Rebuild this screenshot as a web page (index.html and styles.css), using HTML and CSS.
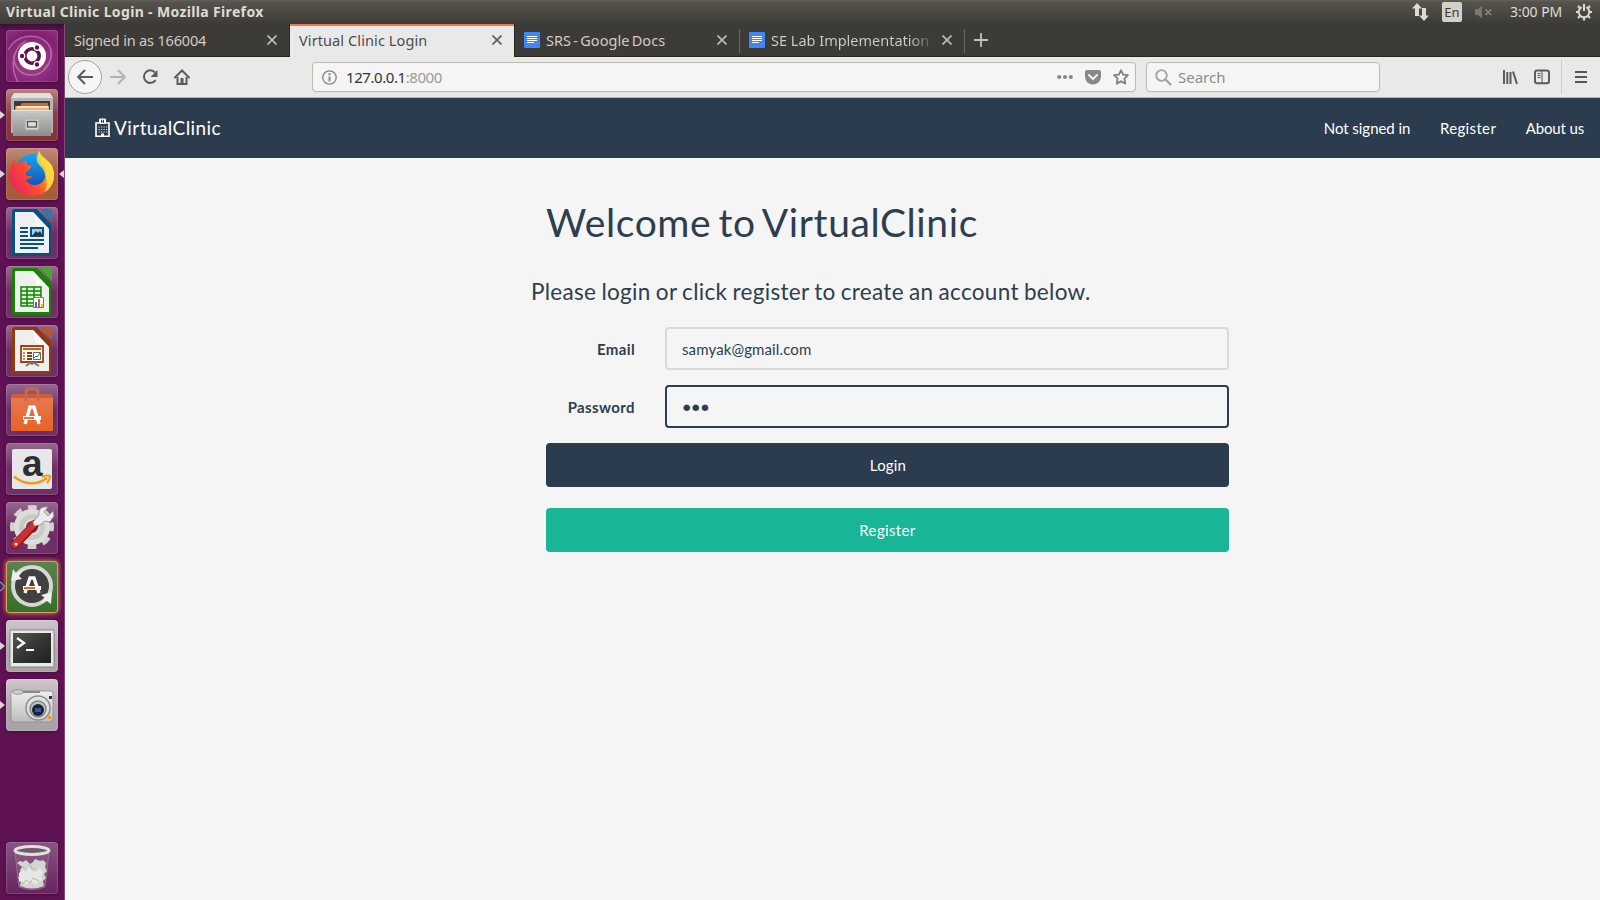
FILE: index.html
```html
<!DOCTYPE html>
<html lang="en">
<head>
<meta charset="utf-8">
<title>Virtual Clinic Login</title>
<link rel="stylesheet" href="styles.css">
</head>
<body>
<header class="panel">
  <span class="panel-title">Virtual Clinic Login - Mozilla Firefox</span>
  <div class="indicators">
    <svg class="ind-net" width="17" height="18" viewBox="0 0 17 18" fill="#dfdbd2"><path d="M5 0l5 5.500H7V13H3V5.500H0z M12 18l-5-5.500h3V5h4v7.500h3z"/></svg>
    <span class="ind-lang">En</span>
    <svg class="ind-vol" width="17" height="14" viewBox="0 0 17 14"><path d="M0 4h3l4-3.500v13L3 10H0z" fill="#7b7871"/><path d="M10.500 4.500l5.500 5.500M16 4.500L10.500 10" stroke="#8a877f" stroke-width="1.700"/></svg>
    <span class="ind-time">3:00 PM</span>
    <svg class="ind-gear" width="16" height="18" viewBox="0 0 16 18" fill="none" stroke="#dfdbd2"><path d="M5.700 4.200a5.300 5.300 0 1 0 4.600 0" stroke-width="2"/><path d="M8 1v7" stroke-width="2"/><path d="M3.700 4.700L2 3M12.300 4.700L14 3M2.500 9H0M13.500 9H16M3.700 13.300L2 15M12.300 13.300L14 15M8 14.500V17.500" stroke-width="2.200"/></svg>
  </div>
</header>
<div class="desktop">
<aside class="launcher">
  <div class="tile t-dash"><svg viewBox="0 0 52 52"><g fill="none" stroke="#e9c6e2" stroke-opacity=".4" stroke-width="1.500"><path d="M2 20C10 4 32 2 42 14c7 9 2 20-4 25M44 18c4 14-6 28-20 27C12 44 7 34 8 25M12 52C4 38 6 18 20 11"/></g><circle cx="26" cy="26" r="14" fill="#fff"/><circle cx="26" cy="26" r="7.200" fill="none" stroke="#5e1451" stroke-width="3.600"/><g fill="#5e1451" stroke="#fff" stroke-width="1.200"><circle cx="16" cy="26" r="2.800"/><circle cx="31" cy="17.500" r="2.800"/><circle cx="31" cy="34.500" r="2.800"/></g></svg></div>
  <div class="tile t-files running"><svg viewBox="0 0 52 52"><defs><linearGradient id="cab" x2="0" y2="1"><stop stop-color="#c9c9c8"/><stop offset="1" stop-color="#8d8d8c"/></linearGradient></defs><path d="M8 4h36l3 5v35H5V9z" fill="#b5b5b4"/><path d="M8 4h36l3 5H5z" fill="#dededd"/><path d="M8 12h36v10H8z" fill="#3f3935"/><path d="M9 17h5l2-3h26v8H9z" fill="#ce6730"/><path d="M10 17h33v5H9z" fill="#f2b178"/><path d="M11 18h31" stroke="#fff" stroke-width="1.300"/><path d="M6 21h40v3l-1 23H7L6 24z" fill="url(#cab)"/><path d="M6 21.500h40" stroke="#e4e4e4"/><rect x="19" y="30" width="14" height="11" rx="2" fill="#d5d5d5" stroke="#aaa"/><rect x="21.500" y="32.500" width="9" height="5.500" fill="#ddd" stroke="#555" stroke-width="1.300"/></svg></div>
  <div class="tile t-firefox running focused"><svg viewBox="0 0 52 52"><defs><linearGradient id="fx" x1="0" y1=".7" x2="1" y2=".1"><stop stop-color="#e9275d"/><stop offset=".4" stop-color="#ff4b2b"/><stop offset=".75" stop-color="#ffad21"/><stop offset="1" stop-color="#fff152"/></linearGradient><linearGradient id="gl" x2="0" y2="1"><stop stop-color="#18a4f2"/><stop offset="1" stop-color="#144aab"/></linearGradient></defs><circle cx="27" cy="24" r="18" fill="url(#gl)"/><path d="M9 11c0 3 1 4 2 5 3-3 7-1 9-5 0 5 1 6 5 7 1 3-4 4-5 7-1 4 2 3 6 3-1 4-5 2-6 4 4 8 16 6 19-2 2-6 0-11-4-14-3-5-2-10-2-13 3 7 9 8 13 15 7 18-5 30-20 30S1 36 4 23c0-4 2-9 5-12z" fill="url(#fx)"/><path d="M33 3c2 7 9 8 13 15 4 9 2 20-7 26 3-9 1-15-1-21-2-4-6-6-7-10-1-4 1-8 2-10z" fill="#ffe64b" fill-opacity=".75"/></svg></div>
  <div class="tile"><svg viewBox="0 0 52 52"><path d="M8 2h23l14 15v30a2 2 0 0 1-2 2H8a2 2 0 0 1-2-2V4a2 2 0 0 1 2-2z" fill="#075181"/><path d="M34 2h10a2 2 0 0 1 2 2v11z" fill="#2a79a8"/><path d="M9 5h18l16 17v24H9z" fill="#efefef"/><path d="M27 5l3 13 13 4z" fill="#fafafa"/><path d="M14 21h8M14 25h8M14 29h8M14 33h24M14 37h24M14 41h18" stroke="#075181" stroke-width="2"/><path d="M25 21h12v8H25z" fill="#9bd0ee" stroke="#075181" stroke-width="2"/><path d="M26 29l4-5 2 2 2-2 3 5z" fill="#333"/></svg></div>
  <div class="tile"><svg viewBox="0 0 52 52"><path d="M8 2h23l14 15v30a2 2 0 0 1-2 2H8a2 2 0 0 1-2-2V4a2 2 0 0 1 2-2z" fill="#158203"/><path d="M34 2h10a2 2 0 0 1 2 2v11z" fill="#42ab2d"/><path d="M9 5h18l16 17v24H9z" fill="#efefef"/><path d="M27 5l3 13 13 4z" fill="#fafafa"/><path d="M15 21h20v19H15z" fill="#d9f6d4" stroke="#158203" stroke-width="1.500"/><path d="M15 25h20M15 29h20M15 33h20M15 37h20M21 21v19M28 21v19" stroke="#158203" stroke-width="1.500"/><path d="M27.500 31.500h10v10h-10z" fill="#fff" stroke="#777"/><path d="M29 36h2v5h-2z" fill="#1a7fc2"/><path d="M32 33h2v8h-2z" fill="#e15a18"/><path d="M35 38h2v3h-2z" fill="#f2c321"/></svg></div>
  <div class="tile"><svg viewBox="0 0 52 52"><path d="M8 2h23l14 15v30a2 2 0 0 1-2 2H8a2 2 0 0 1-2-2V4a2 2 0 0 1 2-2z" fill="#8f3a08"/><path d="M34 2h10a2 2 0 0 1 2 2v11z" fill="#b45d29"/><path d="M9 5h18l16 17v24H9z" fill="#efefef"/><path d="M27 5l3 13 13 4z" fill="#fafafa"/><path d="M15 21h22v16H15z" fill="#fff" stroke="#a63f0c" stroke-width="1.800"/><path d="M17 24h18" stroke="#cf5b22" stroke-width="2"/><path d="M17 28h2M17 31h2M17 34h2" stroke="#d98053" stroke-width="2"/><path d="M21 28h5M21 31h5M21 34h5" stroke="#8f3a08" stroke-width="2"/><path d="M27.500 27.500h7v7h-7z" fill="#fff" stroke="#666"/><path d="M28 33l2-2 1 1 3-4" fill="none" stroke="#26901e"/><path d="M26 37v3M20 41l4-3h4l5 3" fill="none" stroke="#777" stroke-width="1.800"/></svg></div>
  <div class="tile t-dim"><svg viewBox="0 0 52 52"><defs><linearGradient id="bag" x2="0" y2="1"><stop stop-color="#e27b52"/><stop offset="1" stop-color="#ea6324"/></linearGradient></defs><path d="M7 10h38l2 4v33H5V14z" fill="url(#bag)"/><path d="M5 14l3-4h36l3 4z" fill="#d05a35"/><path d="M20 17V8q0-3 3-3h6q3 0 3 3v9" fill="none" stroke="#cb6947" stroke-width="3"/><path d="M19 40l5-17h4l5 17" fill="none" stroke="#fff" stroke-width="3.300"/><path d="M17 34h18" stroke="#fff" stroke-width="4"/><path d="M18 34h10" stroke="#e75f1e" stroke-width="1.700"/></svg></div>
  <div class="tile t-dim"><svg viewBox="0 0 52 52"><rect x="6" y="6" width="40" height="40" rx="2" fill="#e7e7e8"/><text x="16" y="32.500" class="amazon-a">a</text><path d="M8 33.500c10 8.500 23 9 33 1.500" fill="none" stroke="#f49b16" stroke-width="2.500"/><path d="M36 34c4-2 6-2 8-1 0 3-1 5-3 7" fill="none" stroke="#f49b16" stroke-width="2"/></svg></div>
  <div class="tile t-dim"><svg viewBox="0 0 52 52"><circle cx="26" cy="25" r="19.500" fill="none" stroke="#d2d2d0" stroke-width="5" stroke-dasharray="8.500 6.815" transform="rotate(-13 26 25)"/><circle cx="26" cy="25" r="12" fill="none" stroke="#deded9" stroke-width="12"/><circle cx="26" cy="25" r="10.500" fill="none" stroke="#c9c9c6" stroke-width="5"/><path d="M9 43L29 22" stroke="#8d1418" stroke-width="8.500" stroke-linecap="round"/><path d="M9 42.500L28 22" stroke="#cc3034" stroke-width="6.500" stroke-linecap="round"/><path d="M28 24l6-1 5-4 5 1 4-6-1-5-5 5-4-4 4-5c-7-1-10 3-9 8l-6 7z" fill="#ebeceb" stroke="#8a8a88" stroke-width=".8"/><circle cx="10" cy="42" r="1.500" fill="#eee"/></svg></div>
  <div class="tile t-update opening"><svg viewBox="0 0 52 52"><circle cx="26" cy="25" r="19" fill="#414141"/><circle cx="26" cy="25" r="19" fill="none" stroke="#d7d7d3" stroke-width="4"/><path d="M7 8l-2 12 11-2-3-3 4-6-7 3zM45 43l1-12-11 3 4 3-4 5 6-2z" fill="#eeeeec"/><path d="M19 32l5-15h4l5 15" fill="none" stroke="#fff" stroke-width="3.300"/><path d="M17 27h18" stroke="#fff" stroke-width="4"/><path d="M18 27h11" stroke="#ef641e" stroke-width="2"/></svg></div>
  <div class="tile t-light running"><svg viewBox="0 0 52 52"><defs><linearGradient id="term" x2="1" y2="1"><stop stop-color="#555753"/><stop offset=".5" stop-color="#343634"/><stop offset="1" stop-color="#20211f"/></linearGradient></defs><rect x="4" y="10" width="44" height="37" rx="1" fill="#e9e9e8" stroke="#858585"/><rect x="7" y="13" width="38" height="30" fill="url(#term)"/><path d="M11 18l7 5-7 5" fill="none" stroke="#fff" stroke-width="2.300"/><path d="M20 30h8" stroke="#fff" stroke-width="2"/></svg></div>
  <div class="tile t-light running"><svg viewBox="0 0 52 52"><defs><linearGradient id="cam" x2="0" y2="1"><stop stop-color="#efefee"/><stop offset="1" stop-color="#bdbdbb"/></linearGradient></defs><path d="M6 12h39q2 0 2 3v25q0 3-3 3H7q-2 0-2-3V15q0-3 1-3z" fill="url(#cam)" stroke="#8a8a89" stroke-width=".8"/><ellipse cx="12" cy="13" rx="5.500" ry="2.300" fill="#ccc" stroke="#999"/><path d="M17 13h17" stroke="#8a8a89" stroke-width="2"/><circle cx="32" cy="29" r="12" fill="#e2e2e1" stroke="#8d8d8c" stroke-width="1.500"/><circle cx="32" cy="30" r="8" fill="#c1c1c1" stroke="#868686" stroke-width="1.500"/><circle cx="32" cy="31" r="6" fill="#172235"/><path d="M29 29h6v4h-6z" fill="#285da1"/><path d="M43 17h3v3h-3z" fill="#333"/><path d="M42 37h3v3h-3z" fill="#f29a20"/></svg></div>
  <div class="tile t-trash"><svg viewBox="0 0 52 52"><path d="M9 10l4 35q13 5 26 0l4-35z" fill="#8b5a84" fill-opacity=".65" stroke="#a27c9e" stroke-width=".7"/><path d="M11 21l3-2 3 1 3-2 4 4 3-2 2-3 5 2 3-1 3 3-1 4 2 4-3 3 2 4-3 3 1 5q-12 5-24 0l1-5-3-3 3-4-1-4 2-3z" fill="#d3d5d0"/><path d="M13 31l4-3 3 2 3-5 4 5 4-1 3-3 3 4-2 4 1 4-4 2-2 3-5-3-5 3-4-4-3 1z" fill="#e6e8e3"/><path d="M17 42l3-4 4 3 3-5 6 3M24 22l1 4 5 2M16 24l3 3" fill="none" stroke="#b4b7b2"/><ellipse cx="26" cy="8.500" rx="17" ry="4" fill="#74556f" stroke="#dfe0dc" stroke-width="3"/></svg></div>
</aside>
<section class="browser">
  <div class="tabs">
    <div class="tab first"><span class="tab-label w-signed">Signed in as 166004</span><svg class="close" viewBox="0 0 10 10"><path d="M.5.5l9 9M9.500.5l-9 9"/></svg></div>
    <div class="tab active"><span class="tab-label w-login">Virtual Clinic Login</span><svg class="close" viewBox="0 0 10 10"><path d="M.5.5l9 9M9.500.5l-9 9"/></svg></div>
    <div class="tab"><svg class="doc" viewBox="0 0 16 16"><rect width="16" height="16" rx="1" fill="#4285f4"/><path d="M3 4.500h10M3 6.500h10M3 8.500h10M3 10.500h7" stroke="#fff"/></svg><span class="tab-label w-srs">SRS - Google Docs</span><svg class="close" viewBox="0 0 10 10"><path d="M.5.5l9 9M9.500.5l-9 9"/></svg></div>
    <div class="tab sep"><svg class="doc" viewBox="0 0 16 16"><rect width="16" height="16" rx="1" fill="#4285f4"/><path d="M3 4.500h10M3 6.500h10M3 8.500h10M3 10.500h7" stroke="#fff"/></svg><span class="tab-label w-lab">SE Lab Implementation P</span><svg class="close" viewBox="0 0 10 10"><path d="M.5.5l9 9M9.500.5l-9 9"/></svg></div>
    <div class="newtab"><svg width="14" height="14" viewBox="0 0 14 14"><path d="M7 0v14M0 7h14" stroke="#c5c2ba" stroke-width="1.800"/></svg></div>
  </div>
  <div class="toolbar">
    <span class="back"><svg width="16" height="16" viewBox="0 0 16 16" fill="none" stroke="#5b5b5a" stroke-width="2"><path d="M16 8H1.500M8 1L1.200 8 8 15"/></svg></span>
    <svg class="ic fwd" viewBox="0 0 16 16" fill="none" stroke="#b3b2b0" stroke-width="2"><path d="M0 8h14.500M8 1l6.800 7L8 15"/></svg>
    <svg class="ic reload" viewBox="0 0 16 16" fill="none" stroke="#5b5b5a" stroke-width="2"><path d="M13 3.500A6.300 6.300 0 1 0 13.600 11"/><path d="M15.500 1v7H8.500z" fill="#5b5b5a" stroke="none"/></svg>
    <svg class="ic home" viewBox="0 0 16 16"><path d="M1 8.500L8 1.500l7 7" fill="none" stroke="#5b5b5a" stroke-width="2" stroke-linecap="round"/><path d="M3.500 8v7h9V8" fill="none" stroke="#5b5b5a" stroke-width="2"/><path d="M6.500 9h3v6h-3z" fill="#5b5b5a"/></svg>
    <div class="urlbar">
      <svg width="15" height="15" viewBox="0 0 15 15"><circle cx="7.500" cy="7.500" r="6.700" fill="none" stroke="#858483" stroke-width="1.300"/><path d="M7.500 3.200v2M7.500 6.500v5" stroke="#858483" stroke-width="1.900"/></svg>
      <span class="url"><b>127.0.0.1</b>:8000</span>
      <svg class="dots" width="16" height="6" viewBox="0 0 16 6" fill="#888"><circle cx="2.200" cy="3" r="2.100"/><circle cx="8" cy="3" r="2.100"/><circle cx="13.800" cy="3" r="2.100"/></svg>
      <svg width="16" height="15" viewBox="0 0 16 15"><path d="M2 0h12a2 2 0 0 1 2 2v4.500a8 8 0 0 1-16 0V2a2 2 0 0 1 2-2z" fill="#888"/><path d="M4 5l4 4 4-4" fill="none" stroke="#f5f5f5" stroke-width="2" stroke-linecap="round"/></svg>
      <svg width="16" height="16" viewBox="0 0 16 16"><path d="M8 1.200l2.100 4.400 4.800.6-3.500 3.400.9 5L8 12.200l-4.300 2.400.9-5L1.100 6.200l4.800-.6z" fill="none" stroke="#808080" stroke-width="1.800" stroke-linejoin="round"/></svg>
    </div>
    <div class="searchbar"><svg width="17" height="17" viewBox="0 0 17 17" fill="none" stroke="#a4a3a2"><circle cx="6.500" cy="6.500" r="5.300" stroke-width="1.800"/><path d="M10.500 10.500l5.500 5.500" stroke-width="2.300"/></svg><span class="search-text">Search</span></div>
    <svg class="ic lib" viewBox="0 0 16 16" stroke="#5b5b5a" stroke-width="2"><path d="M2 1v14M5.300 3v12M8.500 3v12M11 2.500L15 15"/></svg>
    <svg class="ic side" viewBox="0 0 16 16"><rect x="1" y="1.500" width="14" height="12.800" rx="2" fill="none" stroke="#5b5b5a" stroke-width="2"/><path d="M8 2v12M3.500 4.500h3M3.500 6.500h3M3.500 8.500h3" stroke="#5b5b5a"/></svg>
    <span class="divider"></span>
    <svg class="menu" width="12" height="14" viewBox="0 0 12 14"><path d="M0 2h12M0 7h12M0 12h12" stroke="#555" stroke-width="2" stroke-linecap="round"/></svg>
  </div>
  <nav class="navbar">
    <span class="brand"><svg width="15" height="20" viewBox="0 0 15 20"><path d="M4 5H1v13.200h13V5h-3" fill="none" stroke="#fff" stroke-width="1.600"/><path d="M5 .5h5q1 0 1 1V5q0 1-1 1H5Q4 6 4 5V1.500q0-1 1-1z" fill="#fff"/><path d="M6.500 1.800v3M8.500 1.800v3M6.500 3.300h2" stroke="#2c3e50"/><path d="M3.500 9h9M3.500 11.500h9M3.500 14h9" stroke="#dfe3e6" stroke-width="1" stroke-dasharray="1.200 1.300"/><path d="M6 15.500h3V19H6z" fill="#fff"/></svg>VirtualClinic</span>
    <div class="links"><a class="l-sign">Not signed in</a><a class="l-reg">Register</a><a class="l-about">About us</a></div>
  </nav>
  <main class="page">
    <form class="login">
      <h1>Welcome to VirtualClinic</h1>
      <p class="lead">Please login or click register to create an account below.</p>
      <div class="row"><label>Email</label><div class="field">samyak@gmail.com</div></div>
      <div class="row"><label>Password</label><div class="field focus"><span class="mask">●●●</span></div></div>
      <div class="btn primary">Login</div>
      <div class="btn success">Register</div>
    </form>
  </main>
</section>
</div>
</body>
</html>
```

FILE: styles.css
```css
* { box-sizing: border-box; }
body { margin: 0; width: 1600px; height: 900px; overflow: hidden; display: flex; flex-direction: column; font: 14px/20px "Noto Sans", sans-serif; background: #f5f5f5; }
svg { display: block; flex: none; }

.panel { height: 24px; display: flex; justify-content: space-between; align-items: center; background: linear-gradient(#626059 0, #56544c 2px, #3c3b37); color: #dfdbd2; padding: 0 8px 0 6px; flex: none; }
.panel-title { font-size: 14px; font-weight: 700; white-space: nowrap; letter-spacing: .35px; }
.indicators { display: flex; align-items: center; }
.ind-net { margin-right: 13px; }
.ind-lang { width: 20px; height: 20px; border-radius: 2px; background: #d3d0c7; color: #3c3b37; text-align: center; font-size: 13px; margin-right: 13px; }
.ind-vol { margin-right: 18px; }
.ind-time { width: 53px; white-space: nowrap; letter-spacing: -.05px; margin-right: 13px; }

.desktop { flex: 1; display: flex; min-height: 0; }
.launcher { width: 65px; background: linear-gradient(#3e0d36 0, #5e1153 6px, #5e1153 100%); border-right: 1px solid #824878; padding: 6px 0 6px 6px; display: flex; flex-direction: column; gap: 7px; flex: none; }
.tile { width: 52px; height: 52px; border-radius: 4px; position: relative; background: linear-gradient(#96698f, #6e2c65 50%, #712f68); box-shadow: inset 0 0 0 1px rgba(255,255,255,.14), 0 1px 3px rgba(0,0,0,.3); }
.tile svg { width: 52px; height: 52px; }
.t-dash { background: radial-gradient(circle at 50% 60%, #a54591, #822073 70%, #8d397e); }
.t-files { background: linear-gradient(#b58280, #883d42 50%, #853138); }
.t-firefox { background: linear-gradient(#bd8d76, #a55f3e 50%, #a65c38); }
.t-update { background: linear-gradient(#5b844d, #32702b); box-shadow: 0 0 4px 1px #c8723f, inset 0 0 0 1px #e49b5d; }
.t-light { background: linear-gradient(#cfc7cd, #b3a6b1 50%, #aaa1a8); }
.t-trash { margin-top: auto; background: linear-gradient(#865580, #682360); }
.running::before, .focused::after, .opening::before { content: ""; position: absolute; top: 22px; border: 4px solid transparent; }
.running::before { left: -6px; border-left: 5px solid #d9d5d8; border-right: 0; }
.focused::after { right: -6px; border-right: 5px solid #d9d5d8; border-left: 0; }
.opening::before { left: -9px; width: 6px; height: 6px; border: 1px solid #6fb2d5; border-left: 0; border-bottom: 0; transform: rotate(45deg); }
.amazon-a { font: 700 37px "Liberation Sans", sans-serif; fill: #2e2e2e; }

.browser { flex: 1; min-width: 0; display: flex; flex-direction: column; }
.tabs { height: 33px; display: flex; background: #3c3b37; border-bottom: 1px solid #282421; flex: none; }
.tab { width: 224px; display: flex; align-items: center; padding: 0 12px 0 9px; color: #d1cdc4; height: 32px; font-size: 14.5px; flex: none; }
.tab.active { background: #e9e9e9; color: #4c4c4c; border: 1px solid #2a2724; border-width: 0 1px; box-shadow: inset 0 2px #f07746; height: 33px; width: 226px; padding-bottom: 1px; }
.tab.sep { background: linear-gradient(#686660, #686660) 0 5px / 1px 24px no-repeat, linear-gradient(#686660, #686660) 100% 5px / 1px 24px no-repeat; width: 226px; padding: 0 13px 0 10px; }
.tab-label { flex: 1; white-space: nowrap; }
.w-signed { letter-spacing: -.18px; }
.w-login { letter-spacing: .1px; }
.w-srs { letter-spacing: .05px; word-spacing: -1.6px; }
.w-lab { color: transparent; background: linear-gradient(90deg, #d1cdc4 138px, #3c3b37 165px); -webkit-background-clip: text; background-clip: text; }
.doc { width: 16px; height: 16px; margin-right: 6px; }
.close { width: 10px; height: 10px; fill: none; stroke: #bfbcb3; stroke-width: 1.6; }
.active .close { stroke: #5c5c5c; }
.newtab { width: 34px; padding-left: 9px; display: flex; align-items: center; }

.toolbar { height: 41px; background: #e9e9e8; border-bottom: 1px solid #b9b6b2; display: flex; align-items: center; flex: none; padding-left: 3px; font-size: 15px; }
.back { width: 34px; height: 34px; border: 1px solid #a4a3a1; border-radius: 50%; background: #f5f5f5; display: flex; align-items: center; justify-content: center; margin-right: 8px; }
.ic { width: 16px; height: 16px; margin-right: 16px; }
.home { margin-right: 122px; }
.urlbar, .searchbar { height: 30px; background: #f5f5f5; border: 1px solid #bdb9b3; border-radius: 4px; display: flex; align-items: center; box-shadow: 0 1px 1px rgba(0,0,0,.04); }
.urlbar { width: 824px; padding: 0 6px 0 9px; margin-right: 10px; gap: 12px; }
.url { flex: 1; color: #999; margin-left: -3px; letter-spacing: -.43px; }
.url b { font-weight: 400; color: #333; }
.searchbar { width: 234px; padding-left: 8px; color: #8d8d8d; margin-right: 122px; gap: 6px; }
.side { margin-right: 11px; }
.divider { width: 1px; height: 34px; background: #ccc; margin-right: 13px; }

.navbar { height: 60px; background: #2b3c4e; color: #fff; display: flex; justify-content: space-between; align-items: center; padding: 0 16px 0 30px; flex: none; font: 15px/20px Lato, sans-serif; }
.brand { display: flex; align-items: center; gap: 4px; font-size: 19px; letter-spacing: .43px; }
.links { display: flex; gap: 29.5px; }
.l-sign { letter-spacing: -.04px; }
.l-reg { letter-spacing: .36px; }
.l-about { letter-spacing: -.15px; }

.page { flex: 1; background: #f5f5f5; color: #2c3e50; font: 15px/21px Lato, sans-serif; }
.login { width: 683px; margin: 43px 0 0 481px; }
h1 { margin: 0 0 32px; font-size: 39px; line-height: 43px; font-weight: 400; letter-spacing: .6px; word-spacing: -3.2px; }
.lead { margin: 0 0 20px -15px; font-size: 22.5px; line-height: 31px; white-space: nowrap; letter-spacing: .31px; word-spacing: -.9px; }
.row { display: flex; justify-content: flex-end; align-items: center; margin-bottom: 15px; gap: 30px; }
.row label { font-weight: 700; letter-spacing: .38px; padding-top: 2px; }
.field { width: 564px; height: 43px; border: 2px solid #d3dce3; border-radius: 4px; padding: 10px 15px 8px; letter-spacing: .12px; }
.field.focus { border-color: #2c3e50; }
.mask { display: block; font: 8.5px/20px "DejaVu Sans", sans-serif; letter-spacing: 1.7px; padding-left: 1px; }
.btn { height: 44px; border-radius: 4px; color: #fff; text-align: center; line-height: 44px; background: #2b3c4e; letter-spacing: .36px; }
.btn.primary { padding-left: 1px; letter-spacing: .2px; }
.btn.success { background: #18b697; margin-top: 21px; }
```
